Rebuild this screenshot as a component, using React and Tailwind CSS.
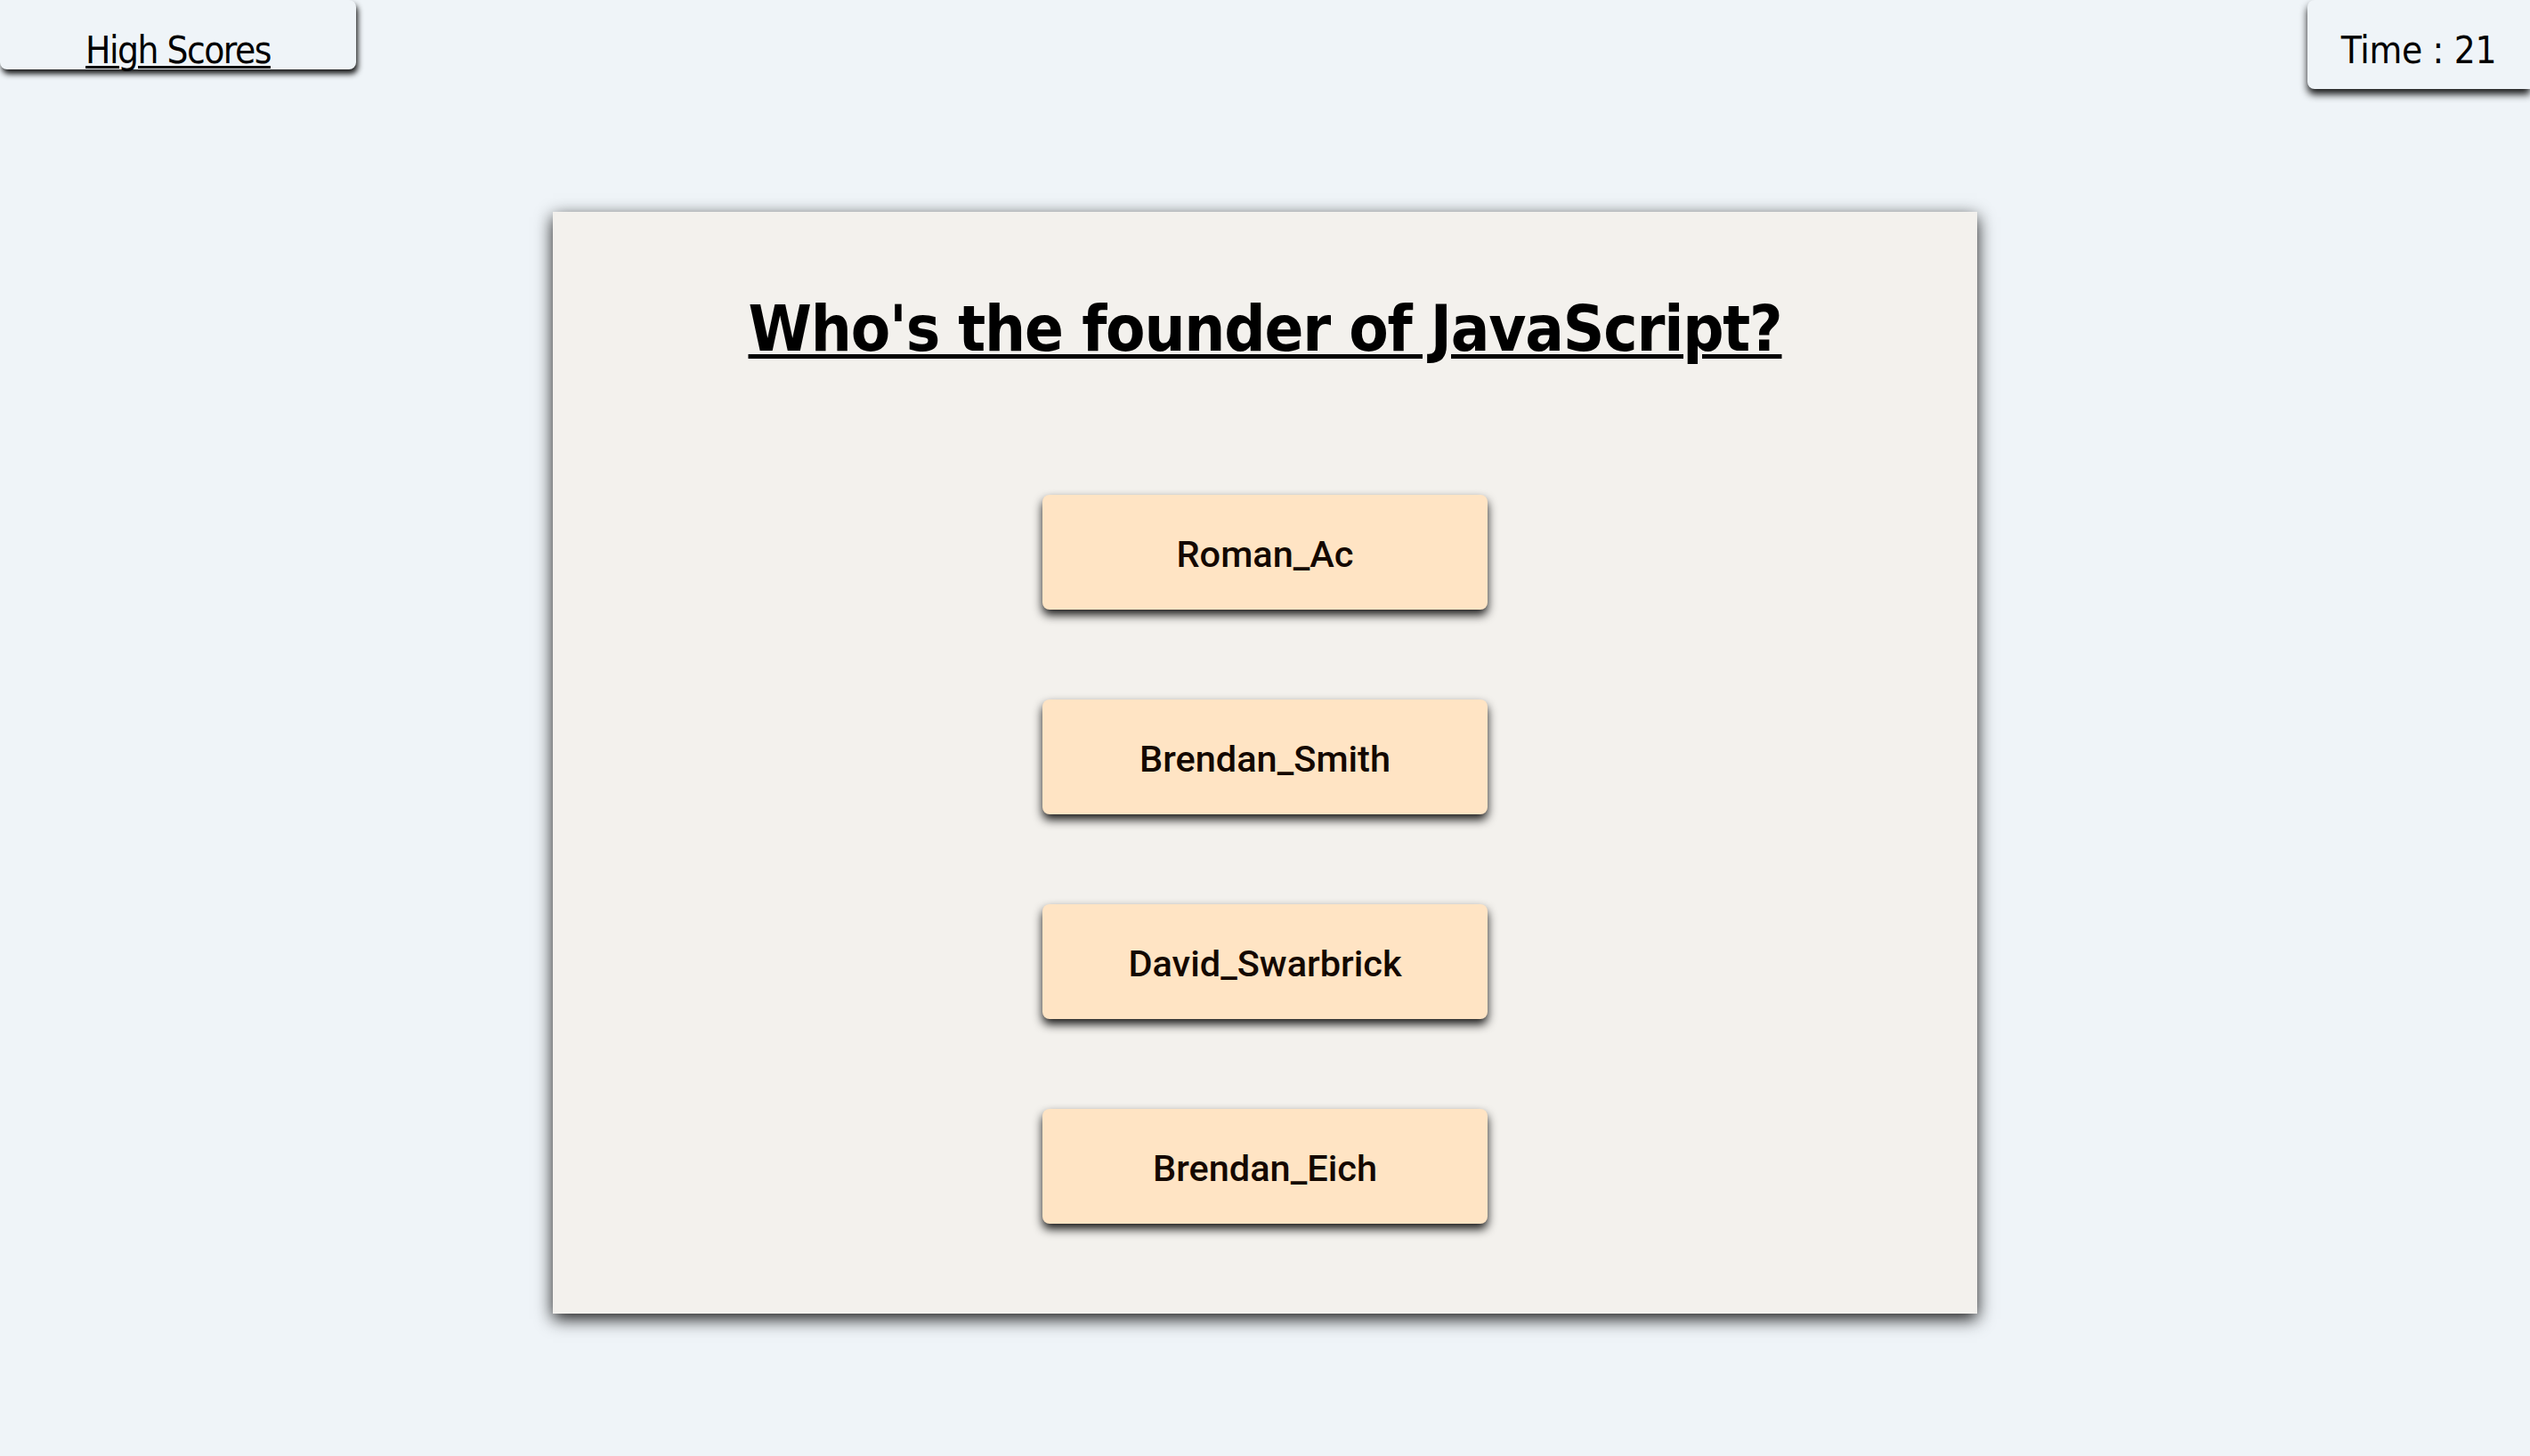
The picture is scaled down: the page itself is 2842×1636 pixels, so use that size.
export default function App() {
  const answers = ["Roman_Ac", "Brendan_Smith", "David_Swarbrick", "Brendan_Eich"];

  return (
    <div className="min-h-screen bg-[#eff4f8] overflow-hidden font-['DejaVu_Sans_Condensed','DejaVu_Sans',sans-serif] text-black">
      {/* Header */}
      <div className="flex items-start justify-between">
        <div className="w-[400px] h-[78px] rounded-b-lg rounded-tr-lg bg-[#eff4f8] shadow-[2px_5px_6px_rgba(0,0,0,0.9)] flex justify-center pt-[33px]">
          <a href="#" className="text-[42px] leading-[1.164] underline decoration-[3px] underline-offset-[3px] tracking-[-1.5px]">
            High Scores
          </a>
        </div>
        <div className="w-[250px] h-[100px] rounded-l-lg bg-[#eff4f8] shadow-[0_6px_8px_rgba(0,0,0,0.9)] flex justify-center pt-[33px]">
          <span className="text-[42px] leading-[1.164] tracking-[-0.3px]">Time : 21</span>
        </div>
      </div>

      {/* Question card */}
      <div className="mx-auto mt-[138px] w-[1600px] bg-[#f3f1ed] shadow-[0_6px_18px_rgba(0,0,0,0.9)] pt-[90px] pb-[101px]">
        <h1 className="text-center text-[72px] leading-[1.164] font-bold underline decoration-[5px] underline-offset-[4px] tracking-[-1.2px]">
          Who's the founder of JavaScript?
        </h1>

        <div className="mt-[144px] flex flex-col items-center gap-[101px]">
          {answers.map((a) => (
            <button
              key={a}
              className="w-[500px] h-[129px] pt-[5px] rounded-lg bg-[#ffe4c4] shadow-[0_6px_11px_rgba(0,0,0,0.9)] font-['Roboto','Liberation_Sans',sans-serif] font-medium text-[41.5px] text-[#140800]"
            >
              {a}
            </button>
          ))}
        </div>
      </div>
    </div>
  );
}
